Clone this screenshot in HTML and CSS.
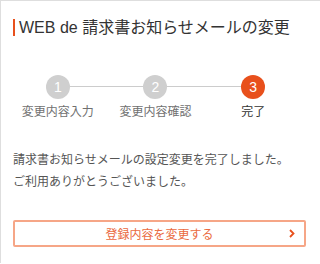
FILE: index.html
```html
<!DOCTYPE html>
<html lang="ja">
<head>
<meta charset="utf-8">
<link rel="stylesheet" href="styles.css">
</head>
<body>
<div class="panel">
  <h1 class="title">WEB de 請求書お知らせメールの変更</h1>
  <ol class="steps">
    <li class="step"><span class="num">1</span><span class="label">変更内容入力</span></li>
    <li class="step"><span class="num">2</span><span class="label">変更内容確認</span></li>
    <li class="step current"><span class="num">3</span><span class="label">完了</span></li>
  </ol>
  <p class="message">請求書お知らせメールの設定変更を完了しました。<br>ご利用ありがとうございました。</p>
  <a class="button" href="#">登録内容を変更する<svg class="chev" width="6" height="9" viewBox="0 0 6 9"><polyline points="1,1 4.5,4.5 1,8" fill="none" stroke="#e8501c" stroke-width="1.8"/></svg></a>
</div>
</body>
</html>
```
FILE: styles.css
```css
html, body {
  margin: 0;
  padding: 0;
  background: #fff;
}
body {
  font-family: "Liberation Sans", "Noto Sans CJK JP", sans-serif;
  color: #333;
}
.panel {
  border-top: 1px solid #dedede;
  border-left: 1px solid #dedede;
  padding: 0 14px 0 12px;
  height: 263px;
  box-sizing: border-box;
}
.title {
  margin: 18px 0 0 0;
  border-left: 2px solid #e8501c;
  padding-left: 4px;
  font-size: 16px;
  font-weight: normal;
  line-height: 17px;
  height: 17px;
  color: #333;
  white-space: nowrap;
}
.steps {
  list-style: none;
  margin: 39px 0 0 -4px;
  padding: 0;
  width: 293px;
  display: grid;
  grid-template-columns: 1fr 1fr 1fr;
}
.step {
  position: relative;
  display: flex;
  flex-direction: column;
  align-items: center;
}
.step + .step::before {
  content: "";
  position: absolute;
  top: 11px;
  left: -50%;
  width: 100%;
  height: 1px;
  background: #cccccc;
  z-index: 0;
}
.num {
  position: relative;
  z-index: 1;
  width: 24px;
  height: 24px;
  border-radius: 50%;
  background: #cfcfcf;
  color: #fff;
  font-size: 14px;
  line-height: 24px;
  text-align: center;
}
.current .num {
  background: #e8501c;
}
.label {
  margin-top: 5px;
  font-size: 12px;
  line-height: 16px;
  color: #707070;
  white-space: nowrap;
}
.current .label {
  color: #333;
}
.message {
  margin: 29px 0 0 0;
  font-size: 12px;
  line-height: 22px;
  color: #555;
  white-space: nowrap;
}
.button {
  margin-top: 27px;
  display: flex;
  align-items: center;
  justify-content: center;
  position: relative;
  height: 27px;
  box-sizing: border-box;
  border: 2px solid #f6a687;
  border-radius: 2px;
  color: #ea6a3e;
  font-size: 12px;
  text-decoration: none;
  background: #fff;
}
.chev {
  position: absolute;
  right: 9px;
  top: 7px;
}
```
